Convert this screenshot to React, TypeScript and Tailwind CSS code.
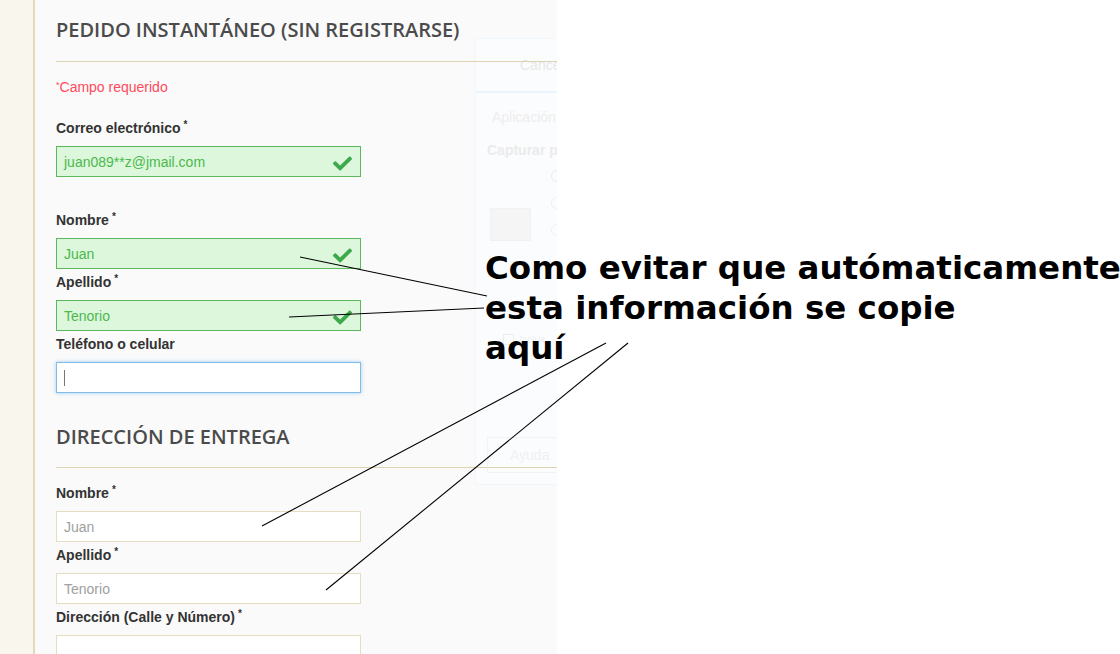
import { FaCheck } from "react-icons/fa";

type FieldProps = {
  label: string;
  required?: boolean;
  value?: string;
  placeholder?: string;
  state?: "valid" | "focus" | "plain";
  gapAfter?: string;
};

function Field({ label, required = true, value, placeholder, state = "plain", gapAfter = "mb-[3px]" }: FieldProps) {
  const box =
    state === "valid"
      ? "border-[#5cb85c] bg-[#dcf7dc] text-[#4cb84c]"
      : state === "focus"
        ? "border-[#82bde9] bg-white shadow-[0_0_4px_rgba(102,175,233,0.6)]"
        : "border-[#e6dcc0] bg-white";

  return (
    <div className={gapAfter}>
      <label className="block text-[14px] leading-[20px] font-bold text-[#333]">
        {label}
        {required && <sup className="ml-[3px] text-[10px] font-bold">*</sup>}
      </label>
      <div className={`relative mt-2 flex h-[31px] w-[305px] items-center border px-[7px] pt-[1px] text-[14px] ${box}`}>
        {state === "focus" && <span className="h-[16px] w-px bg-[#777]" />}
        {value && <span>{value}</span>}
        {placeholder && <span className="text-[#a0a0a0]">{placeholder}</span>}
        {state === "valid" && (
          <FaCheck className="absolute right-[8px] top-[7px] text-[#3da94a]" size={19} />
        )}
      </div>
    </div>
  );
}

// the screen-capture dialog that sits faded over the form
function FadedPopup() {
  return (
    <div className="pointer-events-none absolute left-[440px] top-[38px] h-[447px] w-[140px] border border-[#eef6fb] bg-[#fcfdfe] text-[14px] opacity-80">
      <div className="flex h-[54px] items-center border-b-2 border-[#e8f3fb] pl-[44px] text-[#e3e3e3]">Cancelar</div>
      <div className="whitespace-nowrap pl-[16px] pt-[14px] text-[#ebebeb]">Aplicación</div>
      <div className="whitespace-nowrap pl-[11px] pt-[12px] font-bold text-[#e8e8e8]">Capturar pantalla</div>
      <span className="absolute left-[75px] top-[131px] h-[12px] w-[12px] rounded-full border border-[#d8ebf8]" />
      <span className="absolute left-[75px] top-[158px] h-[12px] w-[12px] rounded-full border border-[#efefef]" />
      <span className="absolute left-[75px] top-[185px] h-[12px] w-[12px] rounded-full border border-[#efefef]" />
      <span className="absolute left-[14px] top-[169px] h-[33px] w-[41px] border border-[#f0f0f0] bg-[#f4f4f4]" />
      <span className="absolute left-[27px] top-[295px] h-[11px] w-[11px] border border-[#ebebeb]" />
      <span className="absolute left-[43px] top-[293px] whitespace-nowrap text-[10px] text-[#eeeeee]">Incluir</span>
      <div className="absolute left-[11px] top-[398px] flex h-[36px] w-[90px] items-center border border-[#f2f2f2] pl-[22px] text-[#efefef]">
        Ayuda
      </div>
    </div>
  );
}

export default function App() {
  return (
    <div
      className="relative flex h-[654px] w-[1120px] overflow-hidden bg-white"
      style={{ fontFamily: '"Liberation Sans", Arial, sans-serif' }}
    >
      <div className="w-[35px] shrink-0 border-r-2 border-[#e3d9bd] bg-[#f9f6ee]" />
      <div className="relative w-[522px] shrink-0 overflow-hidden bg-[#fafafa] pl-[21px] pt-[17px]">
        <FadedPopup />
        <div className="relative">
          <h2
            className="border-b border-[#ddd2b2] pb-[18px] text-[20px] font-semibold leading-[26px] text-[#4b4b4b]"
            style={{ fontFamily: '"Open Sans", sans-serif' }}
          >
            PEDIDO INSTANTÁNEO (SIN REGISTRARSE)
          </h2>
          <p className="mt-[15px] text-[14px] leading-[20px] text-[#ff4a5c]">
            <sup className="text-[9px]">*</sup>Campo requerido
          </p>
          <div className="mt-[21px]">
            <Field label="Correo electrónico" value="juan089**z@jmail.com" state="valid" gapAfter="mb-[33px]" />
            <Field label="Nombre" value="Juan" state="valid" />
            <Field label="Apellido" value="Tenorio" state="valid" />
            <Field label="Teléfono o celular" required={false} state="focus" gapAfter="mb-[31px]" />
          </div>
          <h2
            className="border-b border-[#ddd2b2] pb-[17px] text-[20px] font-semibold leading-[26px] text-[#4b4b4b]"
            style={{ fontFamily: '"Open Sans", sans-serif' }}
          >
            DIRECCIÓN DE ENTREGA
          </h2>
          <div className="mt-[15px]">
            <Field label="Nombre" placeholder="Juan" />
            <Field label="Apellido" placeholder="Tenorio" />
            <Field label="Dirección (Calle y Número)" />
          </div>
        </div>
      </div>

      <svg className="pointer-events-none absolute left-0 top-0" width="1120" height="654">
        <g stroke="#000" strokeWidth="1.1" fill="none">
          <line x1="300" y1="257" x2="487" y2="296" />
          <line x1="289" y1="317" x2="484" y2="308" />
          <line x1="606" y1="343" x2="262" y2="526" />
          <line x1="628" y1="343" x2="326" y2="590" />
        </g>
      </svg>

      <div
        className="absolute left-[485px] top-[248px] whitespace-nowrap text-[32.5px] font-bold leading-[40px] text-black"
        style={{ fontFamily: '"DejaVu Sans", sans-serif' }}
      >
        Como evitar que autómaticamente
        <br />
        esta información se copie
        <br />
        aquí
      </div>
    </div>
  );
}
